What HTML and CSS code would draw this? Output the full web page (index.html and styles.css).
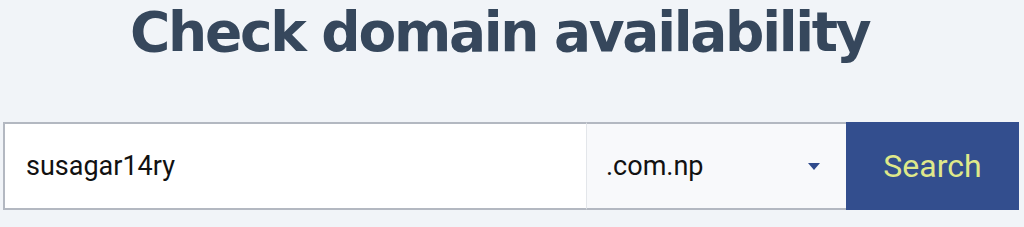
FILE: index.html
```html
<!DOCTYPE html>
<html lang="en">
<head>
    <meta charset="UTF-8">
    <meta name="viewport" content="width=device-width, initial-scale=1.0">
    <title>Domain Search</title>
    <link rel="stylesheet" href="styles.css">
</head>
<body>

<div class="container">
    <h1 class="title">Check domain availability</h1>
    <form class="domain-form" action="/search" method="get">
        <input type="text" class="domain-input" name="domain" value="susagar14ry">
        <div class="tld-select">
            <span class="tld-value">.com.np</span>
            <span class="caret"></span>
        </div>
        <button type="submit" class="search-button">Search</button>
    </form>
</div>

</body>
</html>
```

FILE: styles.css
```css
body {
    margin: 0;
    padding: 0;
    background-color: #f1f4f8;
    font-family: Roboto, Arial, sans-serif;
}
.container {
    padding: 0 5px 0 3px;
}
.title {
    margin: 0 0 58px 0;
    padding: 0 0 0 127px;
    font-family: "DejaVu Sans", sans-serif;
    font-weight: bold;
    font-size: 55px;
    line-height: 64px;
    color: #36475c;
    letter-spacing: -2.3px;
}
.domain-form {
    display: flex;
    height: 88px;
}
.domain-input {
    flex: 1;
    margin: 0;
    padding: 0 0 0 21px;
    border: 1px solid #b3b8c1;
    border-width: 2px 0 2px 2px;
    background: #fff;
    font-family: Roboto, sans-serif;
    font-size: 27px;
    color: #111;
    outline: none;
}
.tld-select {
    display: flex;
    align-items: center;
    justify-content: space-between;
    padding: 0 26px 0 19px;
    background: #f8f9fb;
    border-top: 2px solid #b3b8c1;
    border-bottom: 2px solid #b3b8c1;
    border-left: 1px solid #e3e6ea;
    box-sizing: border-box;
    width: 260px;
    font-size: 27px;
    color: #111;
}
.caret {
    width: 0;
    height: 0;
    border-left: 6px solid transparent;
    border-right: 6px solid transparent;
    border-top: 7px solid #2f4a8c;
}
.search-button {
    width: 173px;
    margin: 0;
    border: none;
    background-color: #334e8e;
    color: #dfe88a;
    font-family: Roboto, sans-serif;
    font-size: 32px;
    cursor: pointer;
}
```
